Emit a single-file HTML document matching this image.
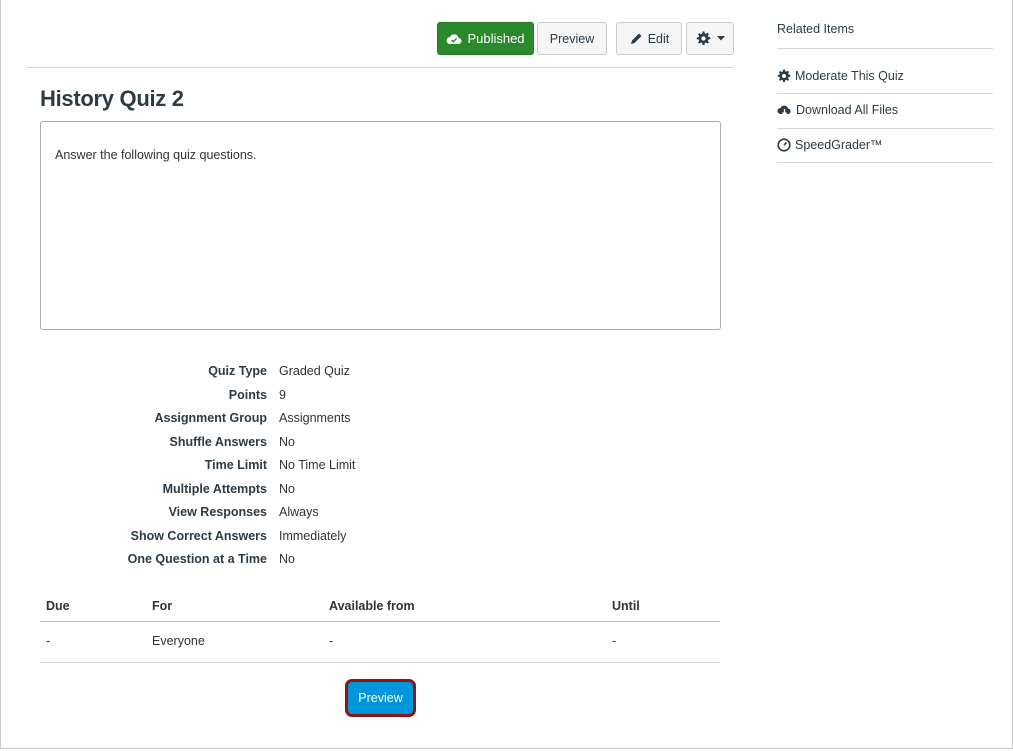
<!DOCTYPE html>
<html><head><style>
body{margin:0;width:1013px;height:751px;background:#fff;font-family:"Liberation Sans",sans-serif;color:#333;position:relative;overflow:hidden}
.frame{position:absolute;left:0;top:0;width:1011px;height:748px;border:1px solid #c8c8c8;border-top:none}
.a{position:absolute}
.btn{position:absolute;top:22px;height:33px;border:1px solid #c7cdd1;border-radius:3px;background:#f5f5f5;box-sizing:border-box;font-size:12.5px;display:flex;align-items:center;justify-content:center;color:#2d3b45}
.lbl{position:absolute;right:746px;font-size:12.5px;font-weight:bold;color:#2d3b45}
.val{position:absolute;left:279px;font-size:12.5px;color:#333}
.side{position:absolute;left:777px;width:216px;font-size:12.5px;color:#2d3b45;display:flex;align-items:center;gap:4px}
.hr{position:absolute;height:1px;background:#d6d6d6}
</style></head><body>
<svg width="0" height="0" style="position:absolute"><defs><g id="gear"><path d="M7 0.5h2l.4 2 1.3.6 1.7-1.2 1.4 1.4-1.2 1.7.6 1.3 2 .4v2l-2 .4-.6 1.3 1.2 1.7-1.4 1.4-1.7-1.2-1.3.6-.4 2H7l-.4-2-1.3-.6-1.7 1.2-1.4-1.4 1.2-1.7-.6-1.3-2-.4V7l2-.4.6-1.3-1.2-1.7 1.4-1.4 1.7 1.2 1.3-.6z" fill="#2d3b45"/><circle cx="8" cy="8" r="2.3" fill="#fff"/></g></defs></svg>
<div class="frame"></div>
<div class="btn" style="left:437px;width:97px;background:#2a8a2b;border-color:#1f7a21;color:#fff;font-size:13px">
<svg width="16" height="13" viewBox="0 0 16 13" style="margin-right:5px"><path d="M4 12a3.5 3.5 0 0 1 0-7 4.5 4.5 0 0 1 8.5 1A3 3 0 0 1 12.5 12z" fill="#fff"/><path d="M5.5 8l1.8 1.8 3.2-3.3" stroke="#2a8a2b" stroke-width="1.4" fill="none"/></svg>Published</div>
<div class="btn" style="left:537px;width:70px">Preview</div>
<div class="btn" style="left:616px;width:66px"><svg width="14" height="14" viewBox="0 0 14 14" style="margin-right:5px"><path d="M2 12l1-3.5 7-7 2.5 2.5-7 7z" fill="#2d3b45"/></svg>Edit</div>
<div class="btn" style="left:686px;width:48px"><svg width="15" height="15" viewBox="0 0 16 16"><use href="#gear"/></svg><svg width="8" height="5" viewBox="0 0 8 5" style="margin-left:6px"><path d="M0 0h8L4 4.5z" fill="#2d3b45"/></svg></div>
<div class="hr" style="left:27px;width:707px;top:67px"></div>
<div class="a" style="left:40px;top:86px;font-size:22px;font-weight:bold;color:#2d3b45;letter-spacing:-0.3px">History Quiz 2</div>
<div class="a" style="left:40px;top:121px;width:679px;height:207px;border:1px solid #aaa;border-radius:3px"></div>
<div class="a" style="left:55px;top:148px;font-size:12.5px">Answer the following quiz questions.</div>
<div class="lbl" style="top:364px">Quiz Type</div><div class="val" style="top:364px">Graded Quiz</div>
<div class="lbl" style="top:388px">Points</div><div class="val" style="top:388px">9</div>
<div class="lbl" style="top:411px">Assignment Group</div><div class="val" style="top:411px">Assignments</div>
<div class="lbl" style="top:435px">Shuffle Answers</div><div class="val" style="top:435px">No</div>
<div class="lbl" style="top:458px">Time Limit</div><div class="val" style="top:458px">No Time Limit</div>
<div class="lbl" style="top:482px">Multiple Attempts</div><div class="val" style="top:482px">No</div>
<div class="lbl" style="top:505px">View Responses</div><div class="val" style="top:505px">Always</div>
<div class="lbl" style="top:529px">Show Correct Answers</div><div class="val" style="top:529px">Immediately</div>
<div class="lbl" style="top:552px">One Question at a Time</div><div class="val" style="top:552px">No</div>
<div class="a" style="left:46px;top:599px;font-size:12.5px;font-weight:bold">Due</div>
<div class="a" style="left:152px;top:599px;font-size:12.5px;font-weight:bold">For</div>
<div class="a" style="left:329px;top:599px;font-size:12.5px;font-weight:bold">Available from</div>
<div class="a" style="left:612px;top:599px;font-size:12.5px;font-weight:bold">Until</div>
<div class="hr" style="left:40px;width:680px;top:621px;background:#bbb"></div>
<div class="a" style="left:46px;top:634px;font-size:12.5px">-</div>
<div class="a" style="left:152px;top:634px;font-size:12.5px">Everyone</div>
<div class="a" style="left:329px;top:634px;font-size:12.5px">-</div>
<div class="a" style="left:612px;top:634px;font-size:12.5px">-</div>
<div class="hr" style="left:40px;width:680px;top:662px"></div>
<div class="a" style="left:345px;top:679px;width:71px;height:38px;box-sizing:border-box;border:3px solid #8b1515;border-radius:7px;background:#0096db;color:#fff;font-size:12.5px;display:flex;align-items:center;justify-content:center">Preview</div>
<div class="side" style="top:22px">Related Items</div>
<div class="hr" style="left:777px;width:216px;top:48px"></div>
<div class="side" style="top:69px"><svg width="14" height="14" viewBox="0 0 16 16"><use href="#gear"/></svg>Moderate This Quiz</div>
<div class="hr" style="left:777px;width:216px;top:93px"></div>
<div class="side" style="top:103px"><svg width="15" height="12" viewBox="0 0 15 12"><path d="M3.5 10a3 3 0 0 1 0-6 4 4 0 0 1 7.5 .5A2.8 2.8 0 0 1 11.5 10z" fill="#2d3b45"/><path d="M7.5 5v5M5.5 8.5l2 2 2-2" stroke="#fff" stroke-width="1.3" fill="none"/></svg>Download All Files</div>
<div class="hr" style="left:777px;width:216px;top:128px"></div>
<div class="side" style="top:138px"><svg width="14" height="14" viewBox="0 0 14 14"><circle cx="7" cy="7" r="5.8" stroke="#2d3b45" stroke-width="1.6" fill="none"/><path d="M7 7l2.5-2.5" stroke="#2d3b45" stroke-width="1.6"/></svg>SpeedGrader™</div>
<div class="hr" style="left:777px;width:216px;top:162px"></div>
</body></html>
